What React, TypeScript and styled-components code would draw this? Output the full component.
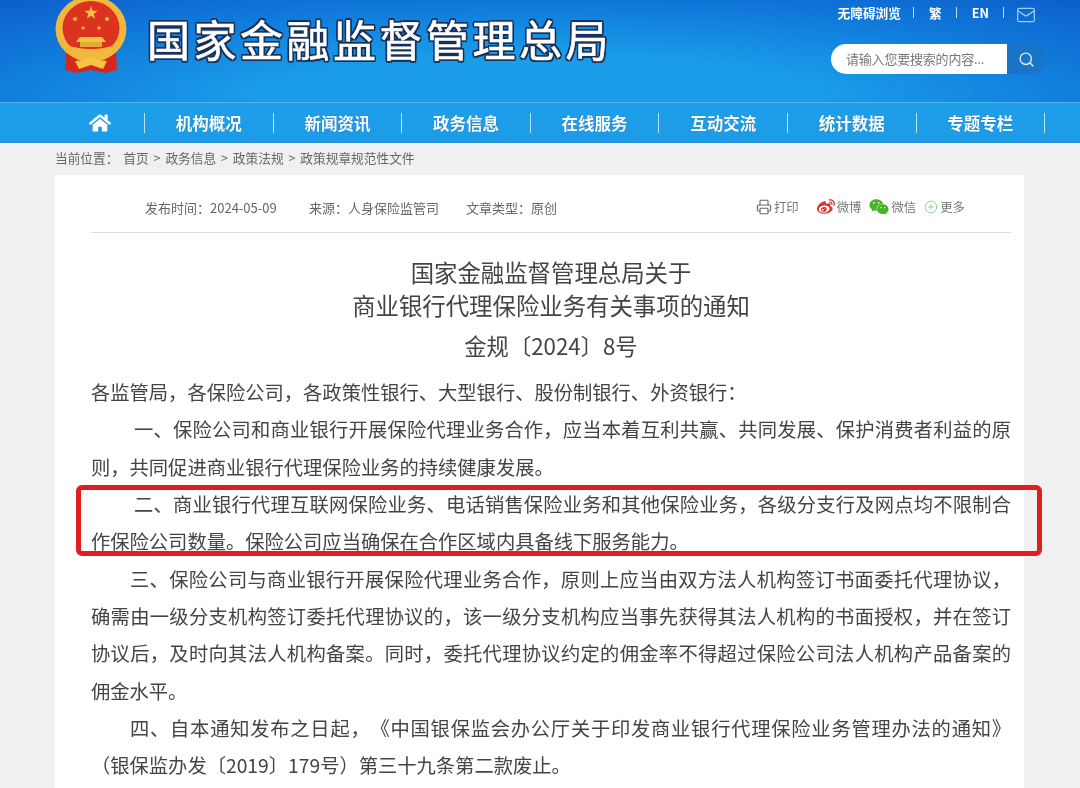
import React from "react";
import styled, { createGlobalStyle } from "styled-components";
import { FaHome, FaWeibo, FaWeixin } from "react-icons/fa";
import { Printer, CirclePlus, Search, Mail } from "lucide-react";

const Global = createGlobalStyle`
  html, body { margin: 0; padding: 0; height: 788px; overflow: hidden; background: #f0f0f0; }
  body { font-family: "Noto Sans CJK SC", "Liberation Sans", sans-serif; color: #444; text-spacing-trim: space-all; }
`;
const Page = styled.div`width: 1080px; height: 788px; overflow: hidden; background: #f0f0f0; filter: blur(0.4px);`;
const Header = styled.header`
  height: 102px;
  background: radial-gradient(ellipse 75% 135% at 50% 100%, #1a9ce9 35%, #107cdb 68%, #0d5ecb 100%);
  display: flex;
  justify-content: space-between;
  padding: 0 34px 0 55px;
  overflow: hidden;
`;
const Brand = styled.div`display: flex; align-items: flex-start; gap: 20px;`;
const Emblem = styled.svg`width: 72px; height: 76px; margin-top: -2px; flex: none;`;
const SiteName = styled.h1`
  margin: 11px 0 0;
  font-size: 43px;
  line-height: 54px;
  font-weight: 400;
  letter-spacing: 3.5px;
  color: #fff;
  white-space: nowrap;
  -webkit-text-stroke: 0.6px #fff;
  text-shadow: 2px 0 0 #17325a, -2px 0 0 #17325a, 0 2px 0 #17325a, 0 -2px 0 #17325a,
    1.6px 1.6px 0 #17325a, -1.6px 1.6px 0 #17325a, 1.6px -1.6px 0 #17325a, -1.6px -1.6px 0 #17325a;
`;
const Tools = styled.div`display: flex; flex-direction: column; align-items: flex-end;`;
const Utility = styled.div`
  display: flex; align-items: center; height: 25px; margin: 0 10px 3px 0; color: #fff;
  font-size: 12.7px; font-weight: 700;
`;
const UtilSep = styled.i<{ $l: number; $r: number }>`
  width: 1px; height: 11px; background: #bfe0f8; margin: 0 ${(p) => p.$r}px 0 ${(p) => p.$l}px;
`;
const MailIcon = styled(Mail)`color: #9fd0f5; margin-top: 4px;`;
const SearchBar = styled.form`display: flex; margin-top: 16px; height: 30px;`;
const SearchInput = styled.div`
  width: 161px; padding-left: 15px; background: #fff; border-radius: 15px 0 0 15px;
  font-size: 13px; line-height: 30px; color: #777; letter-spacing: -0.2px; white-space: nowrap;
`;
const SearchButton = styled.button`
  width: 39px; border: 0; padding: 0; background: #1a74c8; border-radius: 0 15px 15px 0; color: #d8ecfa;
  display: flex; align-items: center; justify-content: center;
`;
const Nav = styled.nav`
  display: flex; align-items: center; padding-left: 55px; height: 39px;
  background: linear-gradient(180deg, #1f9ee9, #1c9ce6);
  border-top: 1px solid #4db4f0; border-bottom: 1px solid #2a8fd6;
`;
const NavCell = styled.a<{ $home?: boolean }>`
  width: ${(p) => (p.$home ? 90 : 128.6)}px; height: 20px; flex: none;
  display: flex; align-items: center; justify-content: center; box-sizing: border-box;
  border-right: 1px solid #bfe3fa; color: #fff; font-size: 16.5px; font-weight: 700;
  text-shadow: 0 0 1px #1463a8;
`;
const Crumbs = styled.div`
  height: 32px; padding-left: 55px; font-size: 12.7px; line-height: 30px; color: #666;
  word-spacing: 2px; white-space: pre;
`;
const Card = styled.main`
  margin: 0 0 0 55px; padding: 0 13px 0 36px; background: #fff; height: 620px; width: 920px;
`;
const Meta = styled.div`
  height: 51px; padding: 7px 46px 0 54px; border-bottom: 1px solid #ddd; display: flex; align-items: center;
  font-size: 13px; color: #666; box-sizing: content-box; height: 50px;
`;
const MetaItem = styled.span<{ $w: number }>`width: ${(p) => p.$w}px; flex: none; white-space: nowrap;`;
const Share = styled.div`margin-left: auto; display: flex; align-items: center; color: #777;`;
const ShareItem = styled.span<{ $gap: number }>`
  display: flex; align-items: center; gap: 2px; margin-left: ${(p) => p.$gap}px; white-space: nowrap; font-size: 12.4px;
`;
const Title = styled.h2`
  margin: 23px 0 0; text-align: center; font-size: 23.4px; line-height: 33px; font-weight: 400; color: #444;
`;
const DocNo = styled.div`
  margin-top: 7px; text-align: center; font-size: 22.3px; line-height: 33px; color: #444;
`;
const Para = styled.p<{ $indent?: number; $boxed?: boolean }>`
  position: relative; margin: 0; font-size: 19.3px; line-height: 37.35px; color: #444;
  text-indent: ${(p) => p.$indent ?? 0}px;
  text-align: justify;
  ${(p) => p.$boxed && `&::after {
    content: ""; position: absolute; left: -15px; right: -31px; top: -1px; bottom: 5px;
    border: 5px solid #df1f1f; border-radius: 6px; box-sizing: border-box;
  }`}
`;
const Body = styled.div`margin-top: 12px;`;

const star = (cx: number, cy: number, r: number) => {
  const pts: string[] = [];
  for (let i = 0; i < 10; i++) {
    const a = -Math.PI / 2 + (i * Math.PI) / 5;
    const q = i % 2 ? r * 0.4 : r;
    pts.push(`${(cx + q * Math.cos(a)).toFixed(1)},${(cy + q * Math.sin(a)).toFixed(1)}`);
  }
  return pts.join(" ");
};

const EmblemMark = () => (
  <Emblem viewBox="0 0 72 76">
    <path d="M11 52 L10 72 L22 75 L36 72 L50 75 L62 72 L61 52 Z" fill="#d4281e" />
    <ellipse cx="36" cy="31" rx="35.5" ry="33" fill="#f2b83e" />
    <ellipse cx="36" cy="30" rx="28.5" ry="27" fill="#dc3320" />
    <polygon points={star(36, 15, 7)} fill="#f6c445" />
    <polygon points={star(20, 21, 3)} fill="#f6c445" />
    <polygon points={star(52, 21, 3)} fill="#f6c445" />
    <polygon points={star(28, 30, 2.5)} fill="#f6c445" />
    <polygon points={star(44, 30, 2.5)} fill="#f6c445" />
    <path d="M21 44 H51 L47 39 H25 Z" fill="#f6c445" />
    <rect x="25" y="44" width="22" height="5" fill="#e8a93a" />
    <path d="M8 46 Q36 56 64 46 L60 54 Q46 56 36 62 Q26 56 12 54 Z" fill="#f2b83e" />
    <path d="M20 63 L29 62 L36 58 L43 62 L52 63 L48 71 L36 67 L24 71 Z" fill="#f6c445" />
  </Emblem>
);

export default function App() {
  const nav = ["机构概况", "新闻资讯", "政务信息", "在线服务", "互动交流", "统计数据", "专题专栏"];
  return (
    <Page>
      <Global />
      <Header>
        <Brand>
          <EmblemMark />
          <SiteName>国家金融监督管理总局</SiteName>
        </Brand>
        <Tools>
          <Utility>
            <span>无障碍浏览</span>
            <UtilSep $l={12} $r={15} />
            <span>繁</span>
            <UtilSep $l={14} $r={15} />
            <span>EN</span>
            <UtilSep $l={14} $r={12} />
            <MailIcon size={20} strokeWidth={1.5} />
          </Utility>
          <SearchBar>
            <SearchInput>请输入您要搜索的内容...</SearchInput>
            <SearchButton type="button"><Search size={17} /></SearchButton>
          </SearchBar>
        </Tools>
      </Header>
      <Nav>
        <NavCell $home><FaHome size={22} /></NavCell>
        {nav.map((n) => <NavCell key={n}>{n}</NavCell>)}
      </Nav>
      <Crumbs>当前位置： 首页 &gt; 政务信息 &gt; 政策法规 &gt; 政策规章规范性文件</Crumbs>
      <Card>
        <Meta>
          <MetaItem $w={164}>发布时间：2024-05-09</MetaItem>
          <MetaItem $w={157}>来源：人身保险监管司</MetaItem>
          <MetaItem $w={100}>文章类型：原创</MetaItem>
          <Share>
            <ShareItem $gap={0}><Printer size={16} strokeWidth={1.6} color="#666" />打印</ShareItem>
            <ShareItem $gap={18}><FaWeibo size={18} color="#e0302a" />微博</ShareItem>
            <ShareItem $gap={8}><FaWeixin size={20} color="#45b524" />微信</ShareItem>
            <ShareItem $gap={8}><CirclePlus size={14} strokeWidth={1.5} color="#7fce8a" />更多</ShareItem>
          </Share>
        </Meta>
        <Title>国家金融监督管理总局关于<br />商业银行代理保险业务有关事项的通知</Title>
        <DocNo>金规〔2024〕8号</DocNo>
        <Body>
          <Para>各监管局，各保险公司，各政策性银行、大型银行、股份制银行、外资银行：</Para>
          <Para $indent={43}>一、保险公司和商业银行开展保险代理业务合作，应当本着互利共赢、共同发展、保护消费者利益的原则，共同促进商业银行代理保险业务的持续健康发展。</Para>
          <Para $indent={43} $boxed>二、商业银行代理互联网保险业务、电话销售保险业务和其他保险业务，各级分支行及网点均不限制合作保险公司数量。保险公司应当确保在合作区域内具备线下服务能力。</Para>
          <Para $indent={39}>三、保险公司与商业银行开展保险代理业务合作，原则上应当由双方法人机构签订书面委托代理协议，确需由一级分支机构签订委托代理协议的，该一级分支机构应当事先获得其法人机构的书面授权，并在签订协议后，及时向其法人机构备案。同时，委托代理协议约定的佣金率不得超过保险公司法人机构产品备案的佣金水平。</Para>
          <Para $indent={39}>四、自本通知发布之日起，《中国银保监会办公厅关于印发商业银行代理保险业务管理办法的通知》（银保监办发〔2019〕179号）第三十九条第二款废止。</Para>
        </Body>
      </Card>
    </Page>
  );
}
